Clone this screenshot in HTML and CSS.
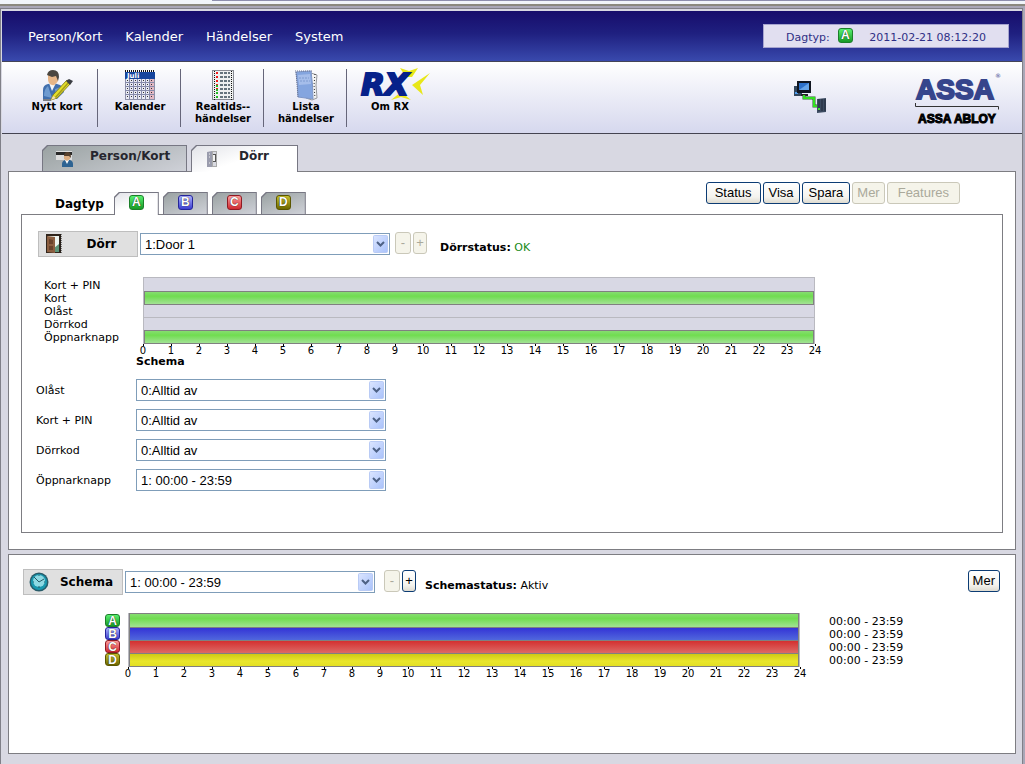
FILE: index.html
```html
<!DOCTYPE html>
<html lang="sv">
<head>
<meta charset="utf-8">
<title>Dörr</title>
<link rel="stylesheet" href="styles.css">
</head>
<body>
<div class="chrome"><span class="chrome-tab"></span></div>
<div class="frame">
  <header class="header">
    <nav class="menu">
      <a href="#">Person/Kort</a><a href="#">Kalender</a><a href="#">Händelser</a><a href="#">System</a>
    </nav>
    <div class="clock"><span>Dagtyp:</span><span class="badge a">A</span><time>2011-02-21 08:12:20</time></div>
  </header>

  <div class="toolbar">
    <a class="tool" href="#">
      <svg width="32" height="31" viewBox="0 0 32 31" aria-hidden="true">
        <path d="M2 29V20q0-5 5-6l6-1 6 2q4 2 4 7l-7 7z" fill="#416fae"/>
        <path d="M3 26q0-7 4-10l4 12zM14 19l6-2-5 9z" fill="#6f9bd0"/>
        <path d="M8 13l3 8 4-8z" fill="#f5f7fa"/>
        <path d="M7 5q4-5 10 0v6q-3 5-6 4-4-1-4-6z" fill="#e7b688"/>
        <path d="M6 5Q7 0 12 0q6 0 6 7l-1 4-2-5-4 1z" fill="#4b4741"/>
        <path d="M2 30h8" stroke="#111" stroke-width="1"/>
        <path d="M10 30l2-5L26 10l4 3-14 15z" fill="#e4df2a" stroke="#8c8720" stroke-width="1"/>
        <path d="M14 28L28 12" stroke="#a59b18" stroke-width="1.5"/>
        <path d="M10 30l2-4 3 2z" fill="#f3deb0"/><path d="M25 11l3-2 4 2-3 4z" fill="#3a3d44"/>
      </svg><span>Nytt kort</span></a>
    <a class="tool" href="#">
      <svg width="32" height="31" viewBox="0 0 32 31" aria-hidden="true">
        <rect x="1.500" y="2.500" width="29" height="27" fill="#e9eaf3" stroke="#8d90a8"/>
        <rect x="1" y="2" width="30" height="7" fill="#16459d"/>
        <path d="M1 1h30" stroke="#111" stroke-width="2" stroke-dasharray="1 1"/>
        <text x="3" y="8" class="cal-text">Juli</text>
        <rect x="26" y="9" width="4" height="20" fill="#e3b7c3"/>
        <path d="M1 12.500h29M1 16.500h29M1 20.500h29M1 24.500h29M5.500 9v20M9.500 9v20M13.500 9v20M17.500 9v20M21.500 9v20M25.500 9v20" stroke="#868bab"/>
        <path d="M3 10.500h26M3 14.500h26M3 18.500h26M3 22.500h26M3 26.500h26" stroke="#333" stroke-dasharray="1 3"/>
      </svg><span>Kalender</span></a>
    <a class="tool" href="#">
      <svg width="32" height="31" viewBox="0 0 32 31" aria-hidden="true">
        <rect x="5.500" y=".5" width="21" height="29" fill="#eef0f0" stroke="#878a92"/>
        <path d="M7.500 1v29M24.500 1v29" stroke="#111" stroke-dasharray="1 1"/>
        <path d="M13 3h10M13 7h10M13 11h10M13 15h10M13 19h10M13 23h10M13 27h10" stroke="#65737c" stroke-width="2" stroke-dasharray="3 1"/>
        <path d="M10 2v2M10 6v2M10 10v2M10 14v2M10 18v2" stroke="#ef1c1c" stroke-width="2"/>
        <path d="M10 15v2M10 19v2M10 22v2M10 26v2" stroke="#22b822" stroke-width="2"/>
      </svg><span>Realtids--<br>händelser</span></a>
    <a class="tool" href="#">
      <svg width="32" height="31" viewBox="0 0 32 31" aria-hidden="true">
        <path d="M21 3l6 2-1 10 1 13-5 2-6-2z" fill="#f5f5f5" stroke="#97999d"/>
        <path d="M25 4l-1 11 1 13" stroke="#222" fill="none" stroke-dasharray="1 2"/>
        <path d="M6 2l15-1q2 14 2 28l-15-2q0-12-2-25z" fill="#84a5df" stroke="#7f97c8"/>
        <path d="M8 5l12-1 1 10-12 1z" fill="#a5bdea"/>
        <path d="M9 8h10M10 11h10" stroke="#7f9bd0" stroke-dasharray="2 1"/>
        <path d="M5 1h17M6 2l2 25" stroke="#6a7390" stroke-dasharray="1 1"/>
      </svg><span>Lista<br>händelser</span></a>
    <a class="tool rx" href="#">
      <svg width="74" height="33" viewBox="0 0 74 33" aria-label="RX">
        <path d="M42 0l9 3 9-3-6 9h-6zM72 5L62 17l3 10-11-10z" fill="#e8e719"/>
        <path d="M33 32l10-8 10 8-10-3z" fill="#e8e719"/>
        <text x="3" y="27" class="rx-text">RX</text>
      </svg><span>Om RX</span></a>
    <div class="brand">
      <svg width="33" height="33" viewBox="0 0 33 33" aria-hidden="true">
        <rect x="0" y="5" width="8" height="10" fill="#33475d"/><rect x="1" y="11" width="3" height="2" fill="#4f9bea"/>
        <rect x="3" y="0" width="14" height="12" fill="#10151f"/><rect x="5" y="2" width="10" height="7" fill="#2d70c9"/><path d="M5 9l10-7v7z" fill="#65a3e8"/>
        <path d="M7 14h7" stroke="#222" stroke-width="2"/>
        <path d="M10 14v3h10v8h3" fill="none" stroke="#2f5b2f" stroke-width="3"/><path d="M10 14v3h10v8h3" fill="none" stroke="#32e020" stroke-width="2"/>
        <path d="M23 18l9-1v14l-9 1z" fill="#3c4b61"/><path d="M25 18v12M28 18v12M31 18v12" stroke="#202b3c"/><rect x="24" y="27" width="2" height="2" fill="#36e329"/>
      </svg>
      <svg class="logo" width="86" height="54" viewBox="0 0 86 54">
        <text x="40" y="28" class="logo-big">ASSA</text>
        <text x="80" y="7" class="logo-reg">®</text>
        <path d="M.5 32v3.500h83v3" fill="none" stroke="#333"/>
        <text x="42" y="52" class="logo-small">ASSA ABLOY</text>
      </svg>
    </div>
  </div>

  <main class="content">
    <div class="tabs">
      <a class="tab" href="#"><span class="tab-face">
        <svg width="18" height="16" viewBox="0 0 18 16" aria-hidden="true"><rect y="0" width="16" height="9" fill="#ddd"/><rect y="1" width="16" height="3" fill="#292929"/><path d="M6 16v-3q0-3 3-4h5q3 1 3 4v3z" fill="#2d6392"/><path d="M9 9l2 4 2-4z" fill="#fff"/><path d="M8 4h6v4l-3 2-3-2z" fill="#dcae83"/><path d="M8 5q0-4 4-4 3 0 3 6l-2-2z" fill="#57402d"/></svg>
        <b>Person/Kort</b></span></a>
      <a class="tab current" href="#"><span class="tab-face">
        <svg width="18" height="16" viewBox="0 0 18 16" aria-hidden="true"><path d="M2 1l5-1v16H2z" fill="#9a9cad"/><path d="M4 3h1M4 6h1M4 12h1" stroke="#eee"/><rect x="7.500" y=".5" width="4" height="15" fill="#d9dae1" stroke="#aaa"/><rect x="8" y="3" width="3" height="8" fill="#555"/><path d="M8 4h2v6H8z" fill="#f4f4f4"/></svg>
        <b>Dörr</b></span></a>
    </div>

    <section class="panel door">
      <div class="daybar">
        <h2>Dagtyp</h2>
        <div class="daytabs">
          <a class="tab current" href="#"><span class="tab-face"><span class="badge a">A</span></span></a>
          <a class="tab" href="#"><span class="tab-face"><span class="badge b">B</span></span></a>
          <a class="tab" href="#"><span class="tab-face"><span class="badge c">C</span></span></a>
          <a class="tab" href="#"><span class="tab-face"><span class="badge d">D</span></span></a>
        </div>
        <div class="actions">
          <button type="button" class="wide">Status</button><button type="button" class="snug">Visa</button><button type="button">Spara</button><button type="button" class="tight" disabled>Mer</button><button type="button" class="widest" disabled>Features</button>
        </div>
      </div>

      <div class="daybox">
        <div class="picker">
          <label class="caption" for="door">
            <svg width="20" height="20" viewBox="0 0 20 20" aria-hidden="true"><rect x="2" y="0" width="15" height="19" fill="#30251c"/><rect x="4" y="2" width="11" height="16" fill="#eef5f0"/><path d="M10 14l5-4v8h-5z" fill="#5c9478"/><path d="M3 2l8 1v16l-8-1z" fill="#8c5f41"/><path d="M5 5l4 1v4H5zM5 12h4v4H5z" fill="#6a432c"/><path d="M17 0v20" stroke="#111" stroke-dasharray="1 1"/></svg>
            <b>Dörr</b></label>
          <select id="door" class="drop"><option>1:Door 1</option></select>
          <div class="steppers first"><button type="button" disabled>-</button><button type="button" disabled>+</button></div>
          <p class="status"><b>Dörrstatus:</b> <span class="ok">OK</span></p>
        </div>

        <div class="timeline">
          <ul class="row-names"><li>Kort + PIN</li><li>Kort</li><li>Olåst</li><li>Dörrkod</li><li>Öppnarknapp</li></ul>
          <div class="plot">
            <div class="bars"><i></i><i class="on"></i><i></i><i></i><i class="on"></i></div>
            <ol class="axis"><li>0</li><li>1</li><li>2</li><li>3</li><li>4</li><li>5</li><li>6</li><li>7</li><li>8</li><li>9</li><li>10</li><li>11</li><li>12</li><li>13</li><li>14</li><li>15</li><li>16</li><li>17</li><li>18</li><li>19</li><li>20</li><li>21</li><li>22</li><li>23</li><li>24</li></ol>
            <h3>Schema</h3>
          </div>
        </div>

        <div class="fields">
          <label for="f1">Olåst</label><select id="f1" class="drop"><option>0:Alltid av</option></select>
          <label for="f2">Kort + PIN</label><select id="f2" class="drop"><option>0:Alltid av</option></select>
          <label for="f3">Dörrkod</label><select id="f3" class="drop"><option>0:Alltid av</option></select>
          <label for="f4">Öppnarknapp</label><select id="f4" class="drop"><option>1: 00:00 - 23:59</option></select>
        </div>
      </div>
    </section>

    <section class="panel schedule">
      <div class="picker">
        <label class="caption" for="schema">
          <svg width="20" height="20" viewBox="0 0 20 20" aria-hidden="true"><circle cx="10" cy="10" r="9.500" fill="#285b69"/><circle cx="10" cy="10" r="8" fill="#1897ae"/><circle cx="10" cy="9" r="6" fill="#8dd9e3"/><path d="M5 5l5 5 5-3M10 3v1M10 14v2M4 10h1M15 10h1" fill="none" stroke="#245967"/></svg>
          <b>Schema</b></label>
        <select id="schema" class="drop"><option>1: 00:00 - 23:59</option></select>
        <div class="steppers"><button type="button" disabled>-</button><button type="button">+</button></div>
        <p class="status"><b>Schemastatus:</b> Aktiv</p>
        <button type="button" class="more tight">Mer</button>
      </div>
      <div class="timeline">
        <div class="row-badges"><span class="badge a">A</span><span class="badge b">B</span><span class="badge c">C</span><span class="badge d">D</span></div>
        <div class="plot">
          <div class="bars"><i class="on"></i><i class="on blue"></i><i class="on red"></i><i class="on yellow"></i></div>
          <ol class="axis"><li>0</li><li>1</li><li>2</li><li>3</li><li>4</li><li>5</li><li>6</li><li>7</li><li>8</li><li>9</li><li>10</li><li>11</li><li>12</li><li>13</li><li>14</li><li>15</li><li>16</li><li>17</li><li>18</li><li>19</li><li>20</li><li>21</li><li>22</li><li>23</li><li>24</li></ol>
        </div>
        <ul class="times"><li>00:00 - 23:59</li><li>00:00 - 23:59</li><li>00:00 - 23:59</li><li>00:00 - 23:59</li></ul>
      </div>
    </section>
  </main>
</div>
</body>
</html>
```
FILE: styles.css
```css
* { box-sizing: border-box; }
body {
  margin: 0;
  min-height: 100vh;
  display: flex;
  flex-direction: column;
  background: #a9a7b7;
  color: #000;
  font: 11px/13px Verdana, "DejaVu Sans", sans-serif;
}
ul, ol, h2, h3, p { margin: 0; padding: 0; list-style: none; }
a { color: inherit; text-decoration: none; }
svg { overflow: visible; }

.chrome {
  height: 6px;
  margin-bottom: 2px;
  background: #f1f5fa;
  border-bottom: 2px solid #8b897f;
  display: flex;
}
.chrome-tab { flex: 1; height: 1px; margin-left: 212px; background: #8e8fae; }
.frame {
  flex: 1;
  margin-right: 2px;
  background: #d8d8e2;
  border: 1px solid #808088;
  border-bottom: 0;
  padding-top: 2px;
}

.header {
  height: 51px;
  padding: 0 13px 0 26px;
  margin-left: 1px;
  display: flex;
  align-items: center;
  justify-content: space-between;
  background: linear-gradient(#170d6b, #1f2080 45%, #3949ad);
  border-bottom: 1px solid #444458;
}
.menu { display: flex; gap: 23px; color: #fff; font-size: 13px; }
.clock {
  display: flex;
  align-items: center;
  min-width: 246px;
  height: 24px;
  padding: 2px 22px 0;
  background: #e1dff0;
  border: 1px solid #a6a4cf;
  color: #2f2f85;
}
.clock .badge { margin: 0 auto 4px 8px; }

.badge {
  display: block;
  width: 15px;
  height: 15px;
  border: 1px solid;
  border-radius: 3px;
  color: #fff;
  font: bold 12px/13px "Liberation Sans", Arial, sans-serif;
  text-align: center;
  text-shadow: 0 0 1px #000;
}
.badge.a { background: linear-gradient(#58f070, #179a25); border-color: #1c7f2a; }
.badge.b { background: linear-gradient(#aab0ff, #3d3fd0); border-color: #25259a; }
.badge.c { background: linear-gradient(#ff9c9c, #cf2a30); border-color: #8f1a22; }
.badge.d { background: linear-gradient(#c5c02c, #6d6800); border-color: #5b5600; }

.toolbar {
  display: flex;
  min-height: 72px;
  padding: 7px 21px 6px 13px;
  margin-left: 1px;
  background: linear-gradient(#fff, #d6d8ee);
  border-bottom: 1px solid #444450;
}
.tool {
  width: 83px;
  padding-left: 2px;
  display: flex;
  flex-direction: column;
  align-items: center;
  border-right: 1px solid #66667a;
  font-weight: bold;
  font-size: 10px;
  line-height: 12px;
  text-align: center;
}
.tool svg { margin: 1px 0 0; flex: none; }
.tool.rx { width: 84px; border: 0; }
.tool.rx svg { margin: -1px 0 0 10px; }
.brand { margin-left: auto; display: flex; gap: 88px; align-items: flex-start; }
.brand > svg { margin-top: 12px; }
.brand > .logo { margin-top: 2px; }
.cal-text { font: bold 7px "DejaVu Sans", sans-serif; fill: #fff; }
.rx-text { font: italic bold 31px "DejaVu Sans", sans-serif; fill: #06218a; stroke: #06218a; stroke-width: 2px; }
.logo-big, .logo-small { font-family: "Liberation Sans", Arial, sans-serif; font-weight: bold; text-anchor: middle; }
.logo-big { font-size: 28px; fill: #36458c; stroke: #36458c; stroke-width: 2px; }
.logo-small { font-size: 12px; stroke: #000; }
.logo-reg { font: 6px "DejaVu Sans", sans-serif; fill: #36458c; }

.content { padding: 11px 6px 10px 7px; }
.tabs { display: flex; gap: 4px; padding-left: 34px; margin-bottom: -1px; position: relative; }
.tab {
  display: block;
  padding: 1px 1px 0;
  background: #777783;
  clip-path: polygon(5px 0, 100% 0, 100% 100%, 0 100%, 0 5px);
}
.tab-face {
  display: flex;
  height: 100%;
  background: linear-gradient(160deg, #9aa2a2, #cfd1d8);
  clip-path: polygon(5px 0, 100% 0, 100% 100%, 0 100%, 0 5px);
}
.tabs .tab { width: 145px; height: 27px; padding-bottom: 1px; font-size: 12px; color: #26262e; }
.tabs .tab-face { padding: 4px 13px; gap: 16px; }
.tabs svg { margin-top: 1px; }
.tabs .tab.current { width: 107px; padding-bottom: 0; }
.tab.current .tab-face { background: linear-gradient(160deg, #e2e3e8, #fff 50%); }

.panel { background: #fff; border: 1px solid #7d7d82; }
.door { padding: 10px 12px 16px; }
.daybar { display: flex; align-items: flex-end; min-height: 32px; }
.daybar h2 { font-size: 12px; line-height: 16px; margin: 0 10px 2px 34px; }
.daytabs { display: flex; gap: 4px; margin-bottom: -1px; position: relative; }
.daytabs .tab { width: 45px; height: 23px; padding-bottom: 1px; }
.daytabs .tab.current { padding-bottom: 0; }
.daytabs .tab-face { justify-content: center; padding-top: 2px; }
.actions { margin: 0 43px 0 auto; display: flex; gap: 2px; align-self: flex-start; }

button {
  height: 22px;
  padding: 0 6px 1px;
  border: 1px solid #0c3c74;
  border-radius: 3px;
  background: linear-gradient(#fff, #f4f3ee 70%, #dedbd0);
  color: #000;
  font: 13px/18px "Liberation Sans", Arial, sans-serif;
}
button:disabled { background: #f5f4ea; border-color: #cac8b9; color: #aaa99b; }
button.wide { padding: 0 8px 1px; }
button.snug { padding: 0 5px 1px; }
button.tight { padding: 0 4px 1px; }
button.widest { padding: 0 10px 1px; }

.daybox { border: 1px solid #7d7d82; min-height: 319px; padding: 16px 14px 41px; }
.picker { display: flex; align-items: center; }
.picker .caption {
  width: 100px;
  height: 26px;
  margin: 0 2px;
  display: flex;
  align-items: center;
  background: #e0e0e0;
  border: 1px solid #bebebe;
  font-size: 12px;
}
.caption svg { margin: 0 0 0 5px; }
.caption b { flex: 1; text-align: center; padding-left: 2px; }
.drop {
  appearance: none;
  width: 250px;
  height: 22px;
  padding: 0 22px 0 4px;
  border: 1px solid #7f9db9;
  border-radius: 0;
  color: #000;
  font: 13px "Liberation Sans", Arial, sans-serif;
  background: #fff url("data:image/svg+xml,%3Csvg xmlns='http://www.w3.org/2000/svg' width='15' height='18'%3E%3Cdefs%3E%3ClinearGradient id='g' x2='1' y2='1'%3E%3Cstop stop-color='%23dbe5ff'/%3E%3Cstop offset='1' stop-color='%23a9c2fb'/%3E%3C/linearGradient%3E%3C/defs%3E%3Crect x='.5' y='.5' width='14' height='17' rx='1' fill='url(%23g)' stroke='%23b9cbf5'/%3E%3Cpath d='M4 7l3.500 3.500L11 7' fill='none' stroke='%234d6185' stroke-width='2'/%3E%3C/svg%3E") no-repeat right 1px center;
}
.steppers { display: flex; gap: 2px; margin: -2px 9px 0; }
.steppers.first { margin: -2px 13px 0 5px; }
.steppers button { width: 16px; padding: 0; }
.steppers button + button { width: 14px; }
.status { padding-top: 6px; }
.ok { color: #188a18; }
.more { margin: -2px 13px 0 auto; }

.timeline { display: flex; }
.door .timeline { padding-top: 20px; }
.row-names { width: 93px; padding: 2px 0 0 8px; flex: none; }
.plot { flex: 0 1 700px; }
.bars { margin: 0 14px; border: solid #b9b9c0; border-width: 0 1px; }
.bars i {
  display: block;
  height: 13px;
  background: #d8d8e4;
  border-top: 1px solid #b9b9c0;
}
.bars i:first-child { height: 14px; }
.bars .on { background: linear-gradient(#86dd70, #70dc50 35%, #a2e294); border: 1px solid #808080; border-bottom: 0; }
.bars .on + i { border-top-color: #808080; }
.bars .on:last-child { border-bottom: 1px solid #808080; height: 14px; }
.bars .blue { background: linear-gradient(#3434d6, #5067dc); }
.bars .red { background: linear-gradient(#d43030, #dd6a66); }
.bars .yellow { background: linear-gradient(#cfca14, #e9e62c 60%, #e4e024); }
.axis { display: grid; grid-template-columns: repeat(25, 1fr); font-size: 10px; line-height: 10px; text-align: center; }
.axis li::before { content: ""; display: block; width: 1px; height: 2px; margin: 0 auto; background: #000; }
.plot h3 { font-size: 11px; line-height: 11px; padding-left: 7px; }

.fields {
  display: grid;
  grid-template-columns: 100px auto;
  justify-content: start;
  align-items: center;
  row-gap: 8px;
  padding-top: 12px;
}

.schedule { margin-top: 4px; min-height: 200px; padding: 14px 2px 14px 12px; }
.schedule .timeline { padding: 18px 0 0 84px; }
.row-badges { flex: none; width: 15px; margin-right: -6px; padding-top: 1px; }
.row-badges .badge { height: 13px; line-height: 12px; }
.times { flex: none; margin-left: 15px; padding-top: 2px; }
```
